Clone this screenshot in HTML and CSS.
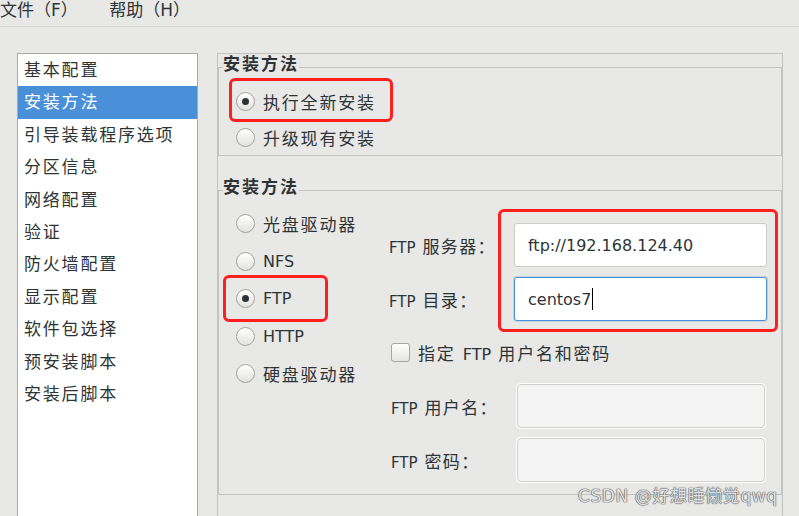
FILE: index.html
```html
<!DOCTYPE html>
<html lang="zh">
<head>
    <meta charset="UTF-8">
    <meta name="viewport" content="width=device-width, initial-scale=1.0">
    <title>安装方法</title>
    <link rel="stylesheet" href="styles.css">
</head>
<body>
    <div class="menubar">
        <span class="menu">文件（F）</span>
        <span class="menu">帮助（H）</span>
    </div>

    <div class="main">
        <!-- 左侧配置项列表 -->
        <ul class="nav">
            <li>基本配置</li>
            <li class="active">安装方法</li>
            <li>引导装载程序选项</li>
            <li>分区信息</li>
            <li>网络配置</li>
            <li>验证</li>
            <li>防火墙配置</li>
            <li>显示配置</li>
            <li>软件包选择</li>
            <li>预安装脚本</li>
            <li>安装后脚本</li>
        </ul>

        <div class="panel">
            <fieldset class="group group-type">
                <legend>安装方法</legend>
                <div class="radio checked"><span class="circle"></span>执行全新安装</div>
                <div class="radio"><span class="circle"></span>升级现有安装</div>
            </fieldset>

            <fieldset class="group group-source">
                <legend>安装方法</legend>
                <div class="source">
                    <div class="sources">
                        <div class="radio"><span class="circle"></span>光盘驱动器</div>
                        <div class="radio"><span class="circle"></span><span class="en">NFS</span></div>
                        <div class="radio checked"><span class="circle"></span><span class="en">FTP</span></div>
                        <div class="radio"><span class="circle"></span><span class="en">HTTP</span></div>
                        <div class="radio"><span class="circle"></span>硬盘驱动器</div>
                    </div>

                    <div class="ftp">
                        <div class="form">
                            <span class="label"><span class="en">FTP</span> 服务器：</span>
                            <div class="entry">ftp://192.168.124.40</div>
                            <span class="label"><span class="en">FTP</span> 目录：</span>
                            <div class="entry focus">centos7<span class="caret"></span></div>
                        </div>

                        <div class="check"><span class="box"></span><span>指定 <span class="en">FTP</span> 用户名和密码</span></div>

                        <div class="form form-auth">
                            <span class="label"><span class="en">FTP</span> 用户名：</span>
                            <div class="entry disabled"></div>
                            <span class="label"><span class="en">FTP</span> 密码：</span>
                            <div class="entry disabled"></div>
                        </div>
                    </div>
                </div>
            </fieldset>
        </div>
    </div>

    <!-- 标注框 -->
    <div class="mark mark-new"></div>
    <div class="mark mark-ftp"></div>
    <div class="mark mark-server"></div>

    <div class="watermark">CSDN @好想睡懒觉qwq</div>
</body>
</html>
```

FILE: styles.css
```css
body {
    margin: 0;
    width: 799px;
    height: 516px;
    overflow: hidden;
    position: relative;
    background: #e8e8e7;
    color: #2e3436;
    font-family: "DejaVu Sans", "Noto Sans CJK SC", sans-serif;
    font-size: 17px;
    letter-spacing: 1.8px;
}

.menubar {
    height: 27px;
    box-sizing: border-box;
    border-bottom: 1px solid #d5d5d4;
    line-height: 20px;
    letter-spacing: 0;
}

.menu {
    margin-right: 26px;
}

.main {
    display: flex;
    padding: 26px 0 0 17px;
}

.nav {
    width: 181px;
    height: 480px;
    box-sizing: border-box;
    margin: 0;
    padding: 0;
    list-style: none;
    background: #fff;
    border: 1px solid #a9a9a9;
}

.nav li {
    height: 32.4px;
    line-height: 32.4px;
    padding-left: 6px;
}

.nav li.active {
    background: #4a90d9;
    color: #fff;
}

.panel {
    width: 566px;
    height: 480px;
    box-sizing: border-box;
    margin-left: 19px;
    border: 1px solid #c3c3c3;
    border-bottom: none;
}

.group {
    margin: 0;
    min-width: 0;
    padding: 0 0 0 4px;
    border: 1px solid #c3c3c3;
}

.group legend {
    padding: 0 0 6px 0;
    line-height: 20px;
    font-weight: bold;
    letter-spacing: 2px;
}

.group-type {
    padding-top: 3px;
}

.group-type .radio {
    height: 36px;
}

.group-source {
    margin-top: 21px;
    padding-bottom: 12px;
}

.source {
    display: flex;
}

.sources {
    width: 166px;
    padding-top: 2px;
}

.sources .radio {
    height: 37.5px;
}

.radio {
    display: flex;
    align-items: center;
    gap: 8px;
    padding-left: 13px;
}

.circle {
    width: 19px;
    height: 19px;
    box-sizing: border-box;
    border: 1px solid #a3a3a1;
    border-radius: 50%;
    background: linear-gradient(#ffffff, #e2e2e0);
    display: flex;
    align-items: center;
    justify-content: center;
}

.radio.checked .circle::after {
    content: "";
    width: 7px;
    height: 7px;
    border-radius: 50%;
    background: #2e3436;
}

.en {
    font-size: 16px;
    letter-spacing: 0;
}

.ftp {
    padding-top: 20px;
}

.form {
    display: grid;
    grid-template-columns: 125px 253px;
    grid-auto-rows: 44px;
    row-gap: 10px;
    align-items: center;
}

.label {
    letter-spacing: 1.4px;
}

.label .en {
    font-size: 15px;
}

.entry {
    height: 100%;
    box-sizing: border-box;
    display: flex;
    align-items: center;
    padding-left: 13px;
    background: #fff;
    border: 1px solid #cfcac6;
    border-radius: 3px;
    font-size: 16px;
    letter-spacing: 0;
}

.entry.focus {
    border-color: #4a90d9;
    box-shadow: 0 0 0 1px rgba(74, 144, 217, 0.25);
}

.caret {
    display: inline-block;
    width: 1px;
    height: 22px;
    margin-left: 1px;
    background: #000;
}

.entry.disabled {
    background: #f4f4f4;
    border-color: #d4d0cc;
    border-radius: 4px;
    box-shadow: 0 0 0 1px #ffffff;
}

.check {
    display: flex;
    align-items: center;
    gap: 8px;
    height: 19px;
    margin: 22px 0 0 2px;
}

.box {
    width: 19px;
    height: 19px;
    box-sizing: border-box;
    border: 1px solid #a5a5a3;
    border-radius: 3px;
    background: linear-gradient(#ffffff, #e4e4e2);
}

.form-auth {
    grid-template-columns: 126px 248px;
    margin-top: 22px;
    padding-left: 2px;
}

/* 红色标注框 */
.mark {
    position: absolute;
    box-sizing: border-box;
    border: 3px solid #ff1f1f;
    border-radius: 6px;
}

.mark-new {
    left: 229px;
    top: 78px;
    width: 164px;
    height: 44px;
}

.mark-ftp {
    left: 223px;
    top: 275px;
    width: 105px;
    height: 47px;
}

.mark-server {
    left: 498px;
    top: 209px;
    width: 280px;
    height: 123px;
}

.watermark {
    position: absolute;
    left: 578px;
    top: 482px;
    font-size: 17px;
    letter-spacing: 0.6px;
    color: rgba(245, 245, 245, 0.9);
    text-shadow: 0 0 1px #555, 0 0 1px #555, 0 0 1px #555;
}
```
